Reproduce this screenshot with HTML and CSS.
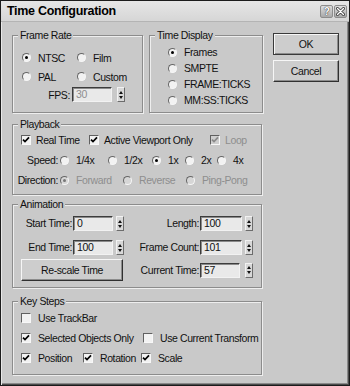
FILE: index.html
```html
<!DOCTYPE html>
<html>
<head>
<meta charset="utf-8">
<title>Time Configuration</title>
<link rel="stylesheet" href="styles.css">
</head>
<body>
<div class="window">
  <div class="titlebar">
    <span class="title">Time Configuration</span>
    <div class="tb-buttons">
      <span class="tbtn">?</span>
      <span class="tbtn"><svg width="9" height="9" viewBox="0 0 9 9"><path d="M1.5 1.5 L7.5 7.5 M7.5 1.5 L1.5 7.5" stroke="#3a3a3a" stroke-width="3" stroke-linecap="round"/><path d="M1.5 1.5 L7.5 7.5 M7.5 1.5 L1.5 7.5" stroke="#fff" stroke-width="1.4" stroke-linecap="round"/></svg></span>
    </div>
  </div>
  <div class="content">
    <div class="toprow">
      <div class="group frame-rate">
        <span class="legend">Frame Rate</span>
        <div class="fr-grid">
          <span class="opt"><span class="rb on"></span>NTSC</span>
          <span class="opt"><span class="rb"></span>Film</span>
          <span class="opt"><span class="rb"></span>PAL</span>
          <span class="opt"><span class="rb"></span>Custom</span>
        </div>
        <div class="fps-row">
          <span class="fps-lbl">FPS:</span>
          <span class="field dim fps-field">30</span>
          <span class="spin"></span>
        </div>
      </div>
      <div class="group time-display">
        <span class="legend">Time Display</span>
        <span class="opt td"><span class="rb on"></span>Frames</span>
        <span class="opt td"><span class="rb"></span>SMPTE</span>
        <span class="opt td"><span class="rb"></span>FRAME:TICKS</span>
        <span class="opt td"><span class="rb"></span>MM:SS:TICKS</span>
      </div>
      <div class="btn-col">
        <span class="btn default">OK</span>
        <span class="btn">Cancel</span>
      </div>
    </div>

    <div class="group playback">
      <span class="legend">Playback</span>
      <div class="row">
        <span class="opt ck w68"><span class="cb on"><svg viewBox="0 0 8 8"><path d="M1 3.6 L3 5.6 L7 1.4"/></svg></span>Real Time</span>
        <span class="opt ck w121"><span class="cb on"><svg viewBox="0 0 8 8"><path d="M1 3.6 L3 5.6 L7 1.4"/></svg></span>Active Viewport Only</span>
        <span class="opt ck dis"><span class="cb on off"><svg viewBox="0 0 8 8"><path d="M1 3.6 L3 5.6 L7 1.4"/></svg></span>Loop</span>
      </div>
      <div class="row shift">
        <span class="row-lbl">Speed:</span>
        <span class="opt w48"><span class="rb"></span>1/4x</span>
        <span class="opt w44"><span class="rb"></span>1/2x</span>
        <span class="opt w33"><span class="rb on"></span>1x</span>
        <span class="opt w32"><span class="rb"></span>2x</span>
        <span class="opt"><span class="rb"></span>4x</span>
      </div>
      <div class="row shift">
        <span class="row-lbl">Direction:</span>
        <span class="opt dis w63"><span class="rb on off"></span>Forward</span>
        <span class="opt dis w63"><span class="rb off"></span>Reverse</span>
        <span class="opt dis"><span class="rb off"></span>Ping-Pong</span>
      </div>
    </div>

    <div class="group animation">
      <span class="legend">Animation</span>
      <div class="anim-grid">
        <span class="alabel">Start Time:</span>
        <span class="field">0</span>
        <span class="spin"></span>
        <span class="alabel">Length:</span>
        <span class="field">100</span>
        <span class="spin"></span>

        <span class="alabel">End Time:</span>
        <span class="field">100</span>
        <span class="spin"></span>
        <span class="alabel">Frame Count:</span>
        <span class="field">101</span>
        <span class="spin"></span>

        <span class="btn rescale">Re-scale Time</span>
        <span class="alabel">Current Time:</span>
        <span class="field">57</span>
        <span class="spin"></span>
      </div>
    </div>

    <div class="group keysteps">
      <span class="legend">Key Steps</span>
      <div class="row">
        <span class="opt ck"><span class="cb"></span>Use TrackBar</span>
      </div>
      <div class="row">
        <span class="opt ck w122"><span class="cb on"><svg viewBox="0 0 8 8"><path d="M1 3.6 L3 5.6 L7 1.4"/></svg></span>Selected Objects Only</span>
        <span class="opt ck"><span class="cb"></span>Use Current Transform</span>
      </div>
      <div class="row">
        <span class="opt ck w62"><span class="cb on"><svg viewBox="0 0 8 8"><path d="M1 3.6 L3 5.6 L7 1.4"/></svg></span>Position</span>
        <span class="opt ck w58"><span class="cb on"><svg viewBox="0 0 8 8"><path d="M1 3.6 L3 5.6 L7 1.4"/></svg></span>Rotation</span>
        <span class="opt ck"><span class="cb on"><svg viewBox="0 0 8 8"><path d="M1 3.6 L3 5.6 L7 1.4"/></svg></span>Scale</span>
      </div>
    </div>
  </div>
</div>
</body>
</html>
```

FILE: styles.css
```css
html, body {
  margin: 0;
  padding: 0;
  background: #c9c9c9;
}

.window {
  width: 350px;
  height: 386px;
  box-sizing: border-box;
  border: 1px solid #1c1c1c;
  background: #c9c9c9;
  box-shadow: inset 1px 1px 0 #e8e8e8, inset -1px -1px 0 #4a4a4a, inset -2px -2px 0 #8a8a8a;
  font-family: "Liberation Sans", Arial, sans-serif;
  font-size: 10.5px;
  letter-spacing: -0.4px;
  color: #111;
}

.titlebar {
  height: 20px;
  display: flex;
  align-items: center;
  justify-content: space-between;
  padding: 0 2px 0 6px;
  background: linear-gradient(#e6e6e6, #d6d6d6);
  border-bottom: 1px solid #b4b4b4;
}

.title {
  font-weight: bold;
  font-size: 12.5px;
  letter-spacing: -0.3px;
  color: #000;
}

.tb-buttons {
  display: flex;
  gap: 1px;
}

.tbtn {
  width: 13px;
  height: 13px;
  box-sizing: border-box;
  border: 1px solid #8c8c8c;
  border-radius: 2px;
  background: linear-gradient(#dedede, #a9a9a9);
  display: flex;
  align-items: center;
  justify-content: center;
  font-weight: bold;
  font-size: 10px;
  color: #fff;
  text-shadow: 0 0 1px #333, 0 0 1px #333;
}

.content {
  padding: 13px 0 0 11px;
}

.toprow {
  display: flex;
  align-items: flex-start;
}

.group {
  position: relative;
  box-sizing: border-box;
  border: 1px solid #8c8c8c;
  box-shadow: inset 1px 1px 0 #eeeeee, 1px 1px 0 #eeeeee;
}

.legend {
  position: absolute;
  top: -7px;
  left: 5px;
  padding: 0 2px;
  line-height: 12px;
  background: #c9c9c9;
}

.opt {
  display: flex;
  align-items: center;
  white-space: nowrap;
  flex: none;
}

.rb {
  width: 9px;
  height: 9px;
  box-sizing: border-box;
  border-radius: 50%;
  background: #f2f2f2;
  border: 1px solid;
  border-color: #666 #f6f6f6 #f6f6f6 #666;
  display: inline-flex;
  align-items: center;
  justify-content: center;
  margin-right: 7px;
  flex: none;
}

.rb.on::after {
  content: "";
  width: 3px;
  height: 3px;
  border-radius: 50%;
  background: #000;
}

.rb.off {
  background: #d6d6d6;
}

.rb.off.on::after {
  background: #777;
}

.cb {
  width: 10px;
  height: 10px;
  box-sizing: border-box;
  background: #f2f2f2;
  border: 1px solid;
  border-color: #606060 #f8f8f8 #f8f8f8 #606060;
  display: inline-flex;
  align-items: center;
  justify-content: center;
  margin-right: 5px;
  flex: none;
}

.cb svg {
  width: 8px;
  height: 8px;
}

.cb path {
  fill: none;
  stroke: #000;
  stroke-width: 1.7;
}

.cb.off {
  background: #cfcfcf;
}

.cb.off path {
  stroke: #8a8a8a;
}

.dis {
  color: #8e8e8e;
}

/* Frame Rate */
.frame-rate {
  width: 131px;
  height: 78px;
  padding: 12px 0 0 9px;
}

.fr-grid {
  display: grid;
  grid-template-columns: 55px 50px;
  grid-auto-rows: 19px;
}

.fps-row {
  display: flex;
  align-items: center;
  margin-top: 1px;
}

.fps-lbl {
  width: 48px;
  text-align: right;
  margin-right: 2px;
}

.fps-field {
  width: 46px;
  margin-right: 5px;
}

/* Time Display */
.time-display {
  width: 114px;
  height: 78px;
  margin-left: 6px;
  padding: 8px 0 0 18px;
}

.td {
  height: 16px;
}

/* Buttons */
.btn-col {
  display: flex;
  flex-direction: column;
  gap: 5px;
  margin-left: 10px;
  margin-top: -2px;
}

.btn {
  box-sizing: border-box;
  width: 66px;
  height: 22px;
  background: #cdcdcd;
  border: 1px solid;
  border-color: #f6f6f6 #303030 #303030 #f6f6f6;
  box-shadow: inset -1px -1px 0 #8c8c8c;
  display: flex;
  align-items: center;
  justify-content: center;
  color: #111;
}

.btn.default {
  border-color: #3a3a3a;
  box-shadow: inset 1px 1px 0 #f6f6f6, inset -1px -1px 0 #8c8c8c;
}

/* Fields & spinners */
.field {
  box-sizing: border-box;
  width: 40px;
  height: 15px;
  background: #e9e9e9;
  border: 1px solid;
  border-color: #3c3c3c #f2f2f2 #f2f2f2 #3c3c3c;
  box-shadow: inset 1px 1px 0 #8a8a8a;
  padding-left: 3px;
  line-height: 13px;
  color: #111;
}

.field.dim {
  color: #8e8e8e;
}

.spin {
  box-sizing: border-box;
  width: 8px;
  height: 15px;
  background: #d8d8d8;
  border: 1px solid;
  border-color: #f2f2f2 #6c6c6c #6c6c6c #f2f2f2;
  display: flex;
  flex-direction: column;
  align-items: center;
  justify-content: center;
  gap: 2px;
  flex: none;
}

.spin::before {
  content: "";
  border-left: 2px solid transparent;
  border-right: 2px solid transparent;
  border-bottom: 3px solid #111;
}

.spin::after {
  content: "";
  border-left: 2px solid transparent;
  border-right: 2px solid transparent;
  border-top: 3px solid #111;
}

/* Playback */
.playback {
  width: 250px;
  height: 71px;
  margin-top: 11px;
  padding: 5px 0 0 8px;
}

.row {
  display: flex;
  align-items: center;
  height: 20px;
}

.row.shift {
  margin-left: -4px;
}

.row-lbl {
  width: 41px;
  text-align: right;
  margin-right: 2px;
  flex: none;
}

.w32 { width: 32px; }
.w33 { width: 33px; }
.w44 { width: 44px; }
.w48 { width: 48px; }
.w58 { width: 58px; }
.w62 { width: 62px; }
.w63 { width: 63px; }
.w68 { width: 68px; }
.w121 { width: 121px; }
.w122 { width: 122px; }

/* Animation */
.animation {
  width: 250px;
  height: 84px;
  margin-top: 9px;
  padding: 11px 0 0 8px;
}

.anim-grid {
  display: grid;
  grid-template-columns: 52px 40px 11px 76px 42px 11px;
  grid-template-rows: 24px 19px 22px;
  align-items: start;
}

.alabel {
  text-align: right;
  padding-right: 1px;
  line-height: 15px;
  white-space: nowrap;
}

.anim-grid .spin {
  margin-left: 3px;
}

.anim-grid .field:nth-child(5),
.anim-grid .field:nth-child(11),
.anim-grid .field:nth-child(16) {
  width: 42px;
}

.rescale {
  grid-column: 1 / 4;
  width: auto;
  margin-right: 1px;
}

.anim-grid > :nth-child(n+14) {
  align-self: center;
}

/* Key Steps */
.keysteps {
  width: 250px;
  height: 74px;
  margin-top: 13px;
  padding: 6px 0 0 8px;
}

.keysteps .cb {
  margin-right: 7px;
}
```
